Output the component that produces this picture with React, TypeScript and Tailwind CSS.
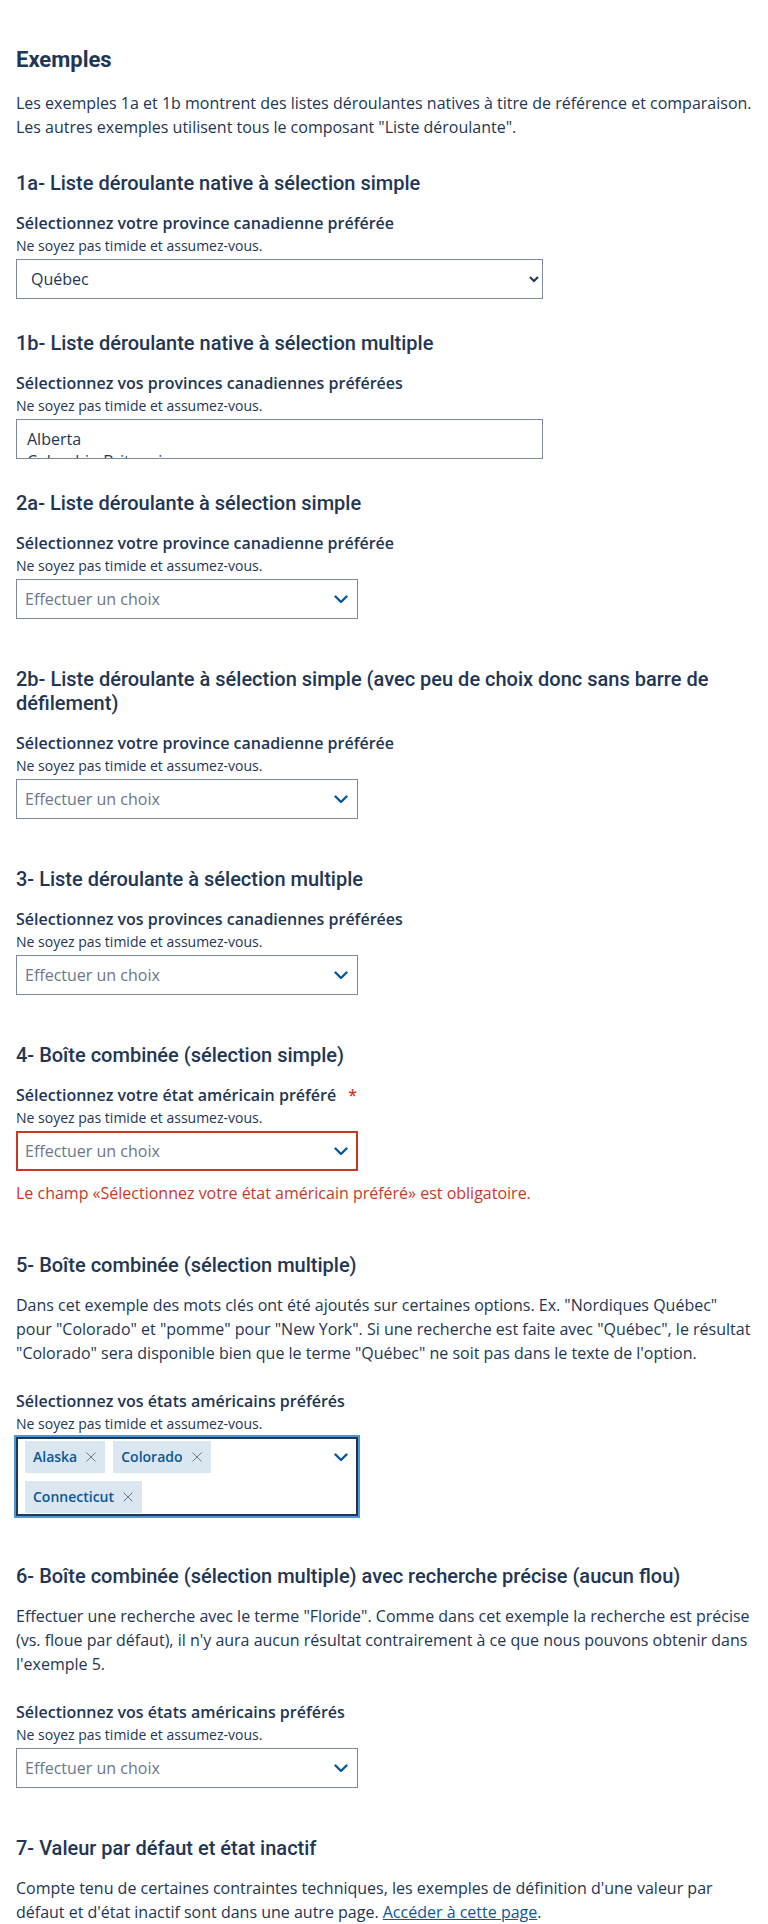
import { ReactNode } from 'react';

const PROVINCES = [
  'Alberta', 'Colombie-Britannique', 'Île-du-Prince-Édouard', 'Manitoba', 'Nouveau-Brunswick',
  'Nouvelle-Écosse', 'Ontario', 'Québec', 'Saskatchewan', 'Terre-Neuve-et-Labrador',
];

const body = "font-['Open_Sans',sans-serif]";
const heading = "font-['Roboto',sans-serif]";

function Chevron() {
  return (
    <svg width="14" height="9" viewBox="0 0 14 9" className="shrink-0">
      <polyline points="1.5,1.5 7,7 12.5,1.5" fill="none" stroke="#095797" strokeWidth="2.4" strokeLinecap="round" strokeLinejoin="round" />
    </svg>
  );
}

function Cross() {
  return (
    <svg width="10" height="10" viewBox="0 0 10 10" className="shrink-0">
      <path d="M0.5 0.5 L9.5 9.5 M9.5 0.5 L0.5 9.5" stroke="#6b778a" strokeWidth="1" fill="none" />
    </svg>
  );
}

function H3({ children, first }: { children: ReactNode; first?: boolean }) {
  return (
    <h3 className={`${heading} ${first ? 'mt-8' : 'mt-12'} text-xl leading-6 font-medium text-[#223654]`}>
      {children}
    </h3>
  );
}

function Field({
  label,
  required,
  afterText,
  children,
}: {
  label: string;
  required?: boolean;
  afterText?: boolean;
  children: ReactNode;
}) {
  return (
    <div className={afterText ? 'mt-6' : 'mt-4'}>
      <div className="text-base leading-6 font-semibold text-[#223654]">
        {label}
        {required && <span className="ml-3 text-[#cb381f]">*</span>}
      </div>
      <div className="text-sm leading-[22px] text-[#223654]">Ne soyez pas timide et assumez-vous.</div>
      <div className="mt-[2px]">{children}</div>
    </div>
  );
}

function Dropdown({ error }: { error?: boolean }) {
  return (
    <div
      className={`flex h-10 w-[342px] items-center justify-between bg-white ${
        error ? 'border-2 border-[#cb381f] pl-[7px] pr-[8px]' : 'border border-[#808a9d] pl-2 pr-[9px]'
      }`}
    >
      <span className="text-base text-[#6b778a]">Effectuer un choix</span>
      <Chevron />
    </div>
  );
}

function Tag({ name }: { name: string }) {
  return (
    <span className="flex h-8 items-center gap-[9px] bg-[#dae6f0] pl-2 pr-[9px] text-sm font-semibold text-[#095797]">
      {name}
      <Cross />
    </span>
  );
}

export default function App() {
  return (
    <div className={`${body} bg-white px-4 pt-[44px] pb-4 text-[#223654]`}>
      <h2 className={`${heading} text-[22px] leading-8 font-bold text-[#223654]`}>Exemples</h2>
      <p className="mt-[15px] text-base leading-6">
        Les exemples 1a et 1b montrent des listes déroulantes natives à titre de référence et comparaison.
        <br />
        Les autres exemples utilisent tous le composant "Liste déroulante".
      </p>

      <H3 first>1a- Liste déroulante native à sélection simple</H3>
      <Field label="Sélectionnez votre province canadienne préférée">
        <select defaultValue="Québec" className="h-10 w-[527px] border border-[#808a9d] bg-white px-2.5 text-base text-[#223654]">
          {PROVINCES.map((p) => (
            <option key={p} value={p}>{p}</option>
          ))}
        </select>
      </Field>

      <H3 first>1b- Liste déroulante native à sélection multiple</H3>
      <Field label="Sélectionnez vos provinces canadiennes préférées">
        <select multiple className="block h-10 w-[527px] overflow-hidden border border-[#808a9d] bg-white px-2.5 pt-2 text-base text-[#223654]">
          {PROVINCES.map((p) => (
            <option key={p} value={p}>{p}</option>
          ))}
        </select>
      </Field>

      <H3 first>2a- Liste déroulante à sélection simple</H3>
      <Field label="Sélectionnez votre province canadienne préférée">
        <Dropdown />
      </Field>

      <H3>2b- Liste déroulante à sélection simple (avec peu de choix donc sans barre de défilement)</H3>
      <Field label="Sélectionnez votre province canadienne préférée">
        <Dropdown />
      </Field>

      <H3>3- Liste déroulante à sélection multiple</H3>
      <Field label="Sélectionnez vos provinces canadiennes préférées">
        <Dropdown />
      </Field>

      <H3>4- Boîte combinée (sélection simple)</H3>
      <Field label="Sélectionnez votre état américain préféré" required>
        <Dropdown error />
        <p className="mt-2.5 text-base leading-6 text-[#cb381f]">
          Le champ «Sélectionnez votre état américain préféré» est obligatoire.
        </p>
      </Field>

      <H3>5- Boîte combinée (sélection multiple)</H3>
      <p className="mt-4 text-base leading-6">
        Dans cet exemple des mots clés ont été ajoutés sur certaines options. Ex. "Nordiques Québec" pour "Colorado" et
        "pomme" pour "New York". Si une recherche est faite avec "Québec", le résultat "Colorado" sera disponible bien
        que le terme "Québec" ne soit pas dans le texte de l'option.
      </p>
      <Field label="Sélectionnez vos états américains préférés" afterText>
        <div className="flex w-[342px] items-start justify-between border-2 border-[#223654] bg-white pt-[2px] pb-[1px] pl-[7px] pr-[8px] shadow-[0_0_0_2px_#4a98d9]">
          <div className="flex flex-wrap gap-2">
            <Tag name="Alaska" />
            <Tag name="Colorado" />
            <Tag name="Connecticut" />
          </div>
          <div className="mt-3">
            <Chevron />
          </div>
        </div>
      </Field>

      <H3>6- Boîte combinée (sélection multiple) avec recherche précise (aucun flou)</H3>
      <p className="mt-4 text-base leading-6">
        Effectuer une recherche avec le terme "Floride". Comme dans cet exemple la recherche est précise (vs. floue par
        défaut), il n'y aura aucun résultat contrairement à ce que nous pouvons obtenir dans l'exemple 5.
      </p>
      <Field label="Sélectionnez vos états américains préférés" afterText>
        <Dropdown />
      </Field>

      <H3>7- Valeur par défaut et état inactif</H3>
      <p className="mt-4 text-base leading-6">
        Compte tenu de certaines contraintes techniques, les exemples de définition d'une valeur par défaut et d'état
        inactif sont dans une autre page.{' '}
        <a href="#" className="text-[#095797] underline">Accéder à cette page</a>.
      </p>
    </div>
  );
}
